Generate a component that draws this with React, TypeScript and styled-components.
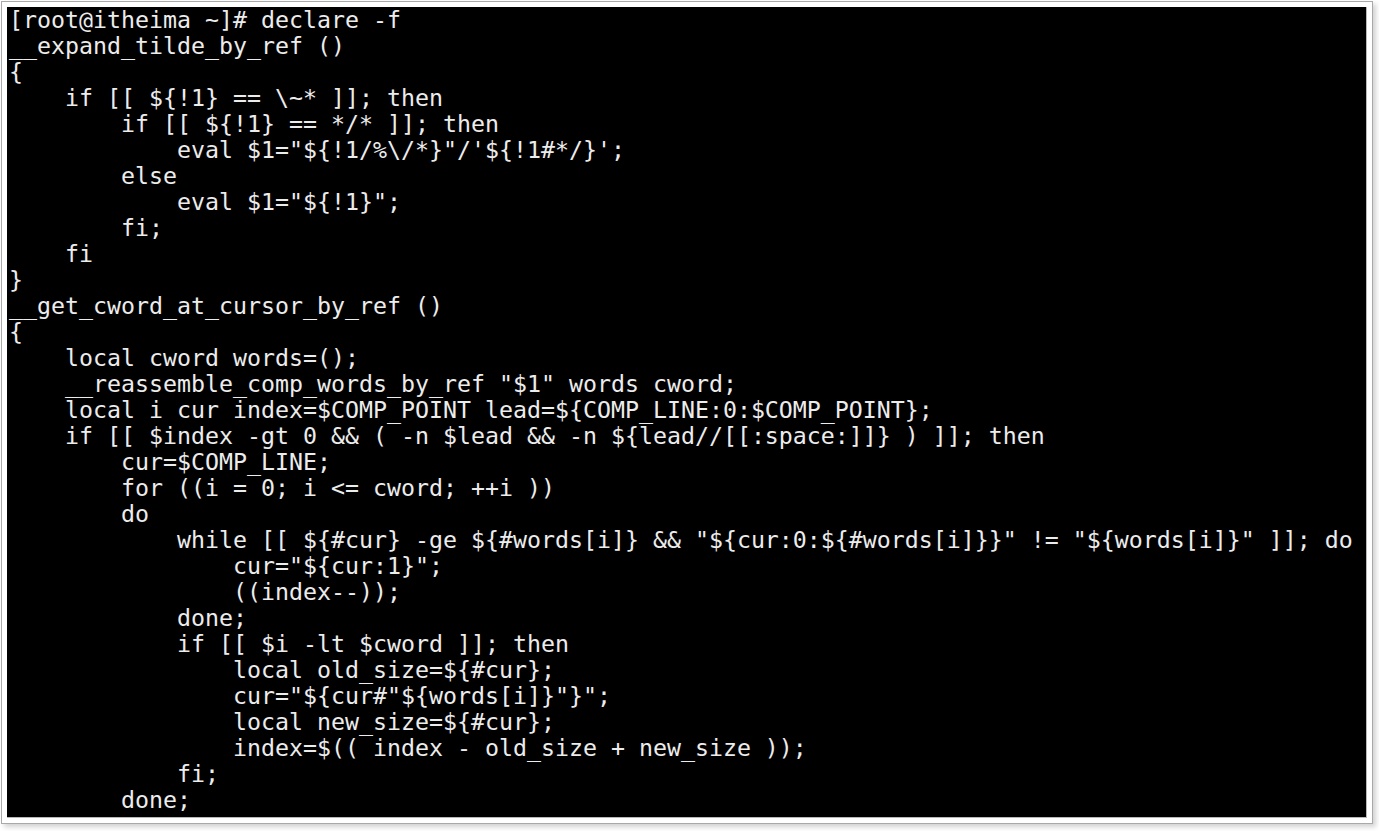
import React from "react";
import styled, { createGlobalStyle } from "styled-components";

const Global = createGlobalStyle`
  html, body {
    margin: 0;
    padding: 0;
    background: #ffffff;
  }
  #root {
    width: 1379px;
    height: 831px;
    overflow: hidden;
  }
`;

const Page = styled.div`
  padding: 1px 0 0 1px;
  width: 1379px;
  height: 831px;
  box-sizing: border-box;
`;

const Frame = styled.div`
  width: 1372px;
  height: 823px;
  box-sizing: border-box;
  border: 1px solid #a9a9a9;
  background: #ffffff;
  padding: 5px;
  box-shadow: 3px 3px 5px rgba(0, 0, 0, 0.18);
  display: flex;
`;

const Screen = styled.pre`
  flex: 1;
  margin: 0;
  background: #000000;
  border-right: 1px solid #b8b8b8;
  border-bottom: 1px solid #b8b8b8;
  padding: 0 0 0 2px;
  overflow: hidden;
  font-family: "DejaVu Sans Mono", "Liberation Mono", monospace;
  font-size: 23.25px;
  line-height: 26px;
  color: #ececec;
  white-space: pre;
`;

const Line = styled.div`
  height: 26px;
`;

const lines: string[] = [
  "[root@itheima ~]# declare -f",
  "__expand_tilde_by_ref ()",
  "{",
  "    if [[ ${!1} == \\~* ]]; then",
  "        if [[ ${!1} == */* ]]; then",
  "            eval $1=\"${!1/%\\/*}\"/'${!1#*/}';",
  "        else",
  "            eval $1=\"${!1}\";",
  "        fi;",
  "    fi",
  "}",
  "__get_cword_at_cursor_by_ref ()",
  "{",
  "    local cword words=();",
  "    __reassemble_comp_words_by_ref \"$1\" words cword;",
  "    local i cur index=$COMP_POINT lead=${COMP_LINE:0:$COMP_POINT};",
  "    if [[ $index -gt 0 && ( -n $lead && -n ${lead//[[:space:]]} ) ]]; then",
  "        cur=$COMP_LINE;",
  "        for ((i = 0; i <= cword; ++i ))",
  "        do",
  "            while [[ ${#cur} -ge ${#words[i]} && \"${cur:0:${#words[i]}}\" != \"${words[i]}\" ]]; do",
  "                cur=\"${cur:1}\";",
  "                ((index--));",
  "            done;",
  "            if [[ $i -lt $cword ]]; then",
  "                local old_size=${#cur};",
  "                cur=\"${cur#\"${words[i]}\"}\";",
  "                local new_size=${#cur};",
  "                index=$(( index - old_size + new_size ));",
  "            fi;",
  "        done;",
];

export default function App() {
  return (
    <>
      <Global />
      <Page>
        <Frame>
          <Screen>
            {lines.map((l, i) => (
              <Line key={i}>{l}</Line>
            ))}
          </Screen>
        </Frame>
      </Page>
    </>
  );
}
